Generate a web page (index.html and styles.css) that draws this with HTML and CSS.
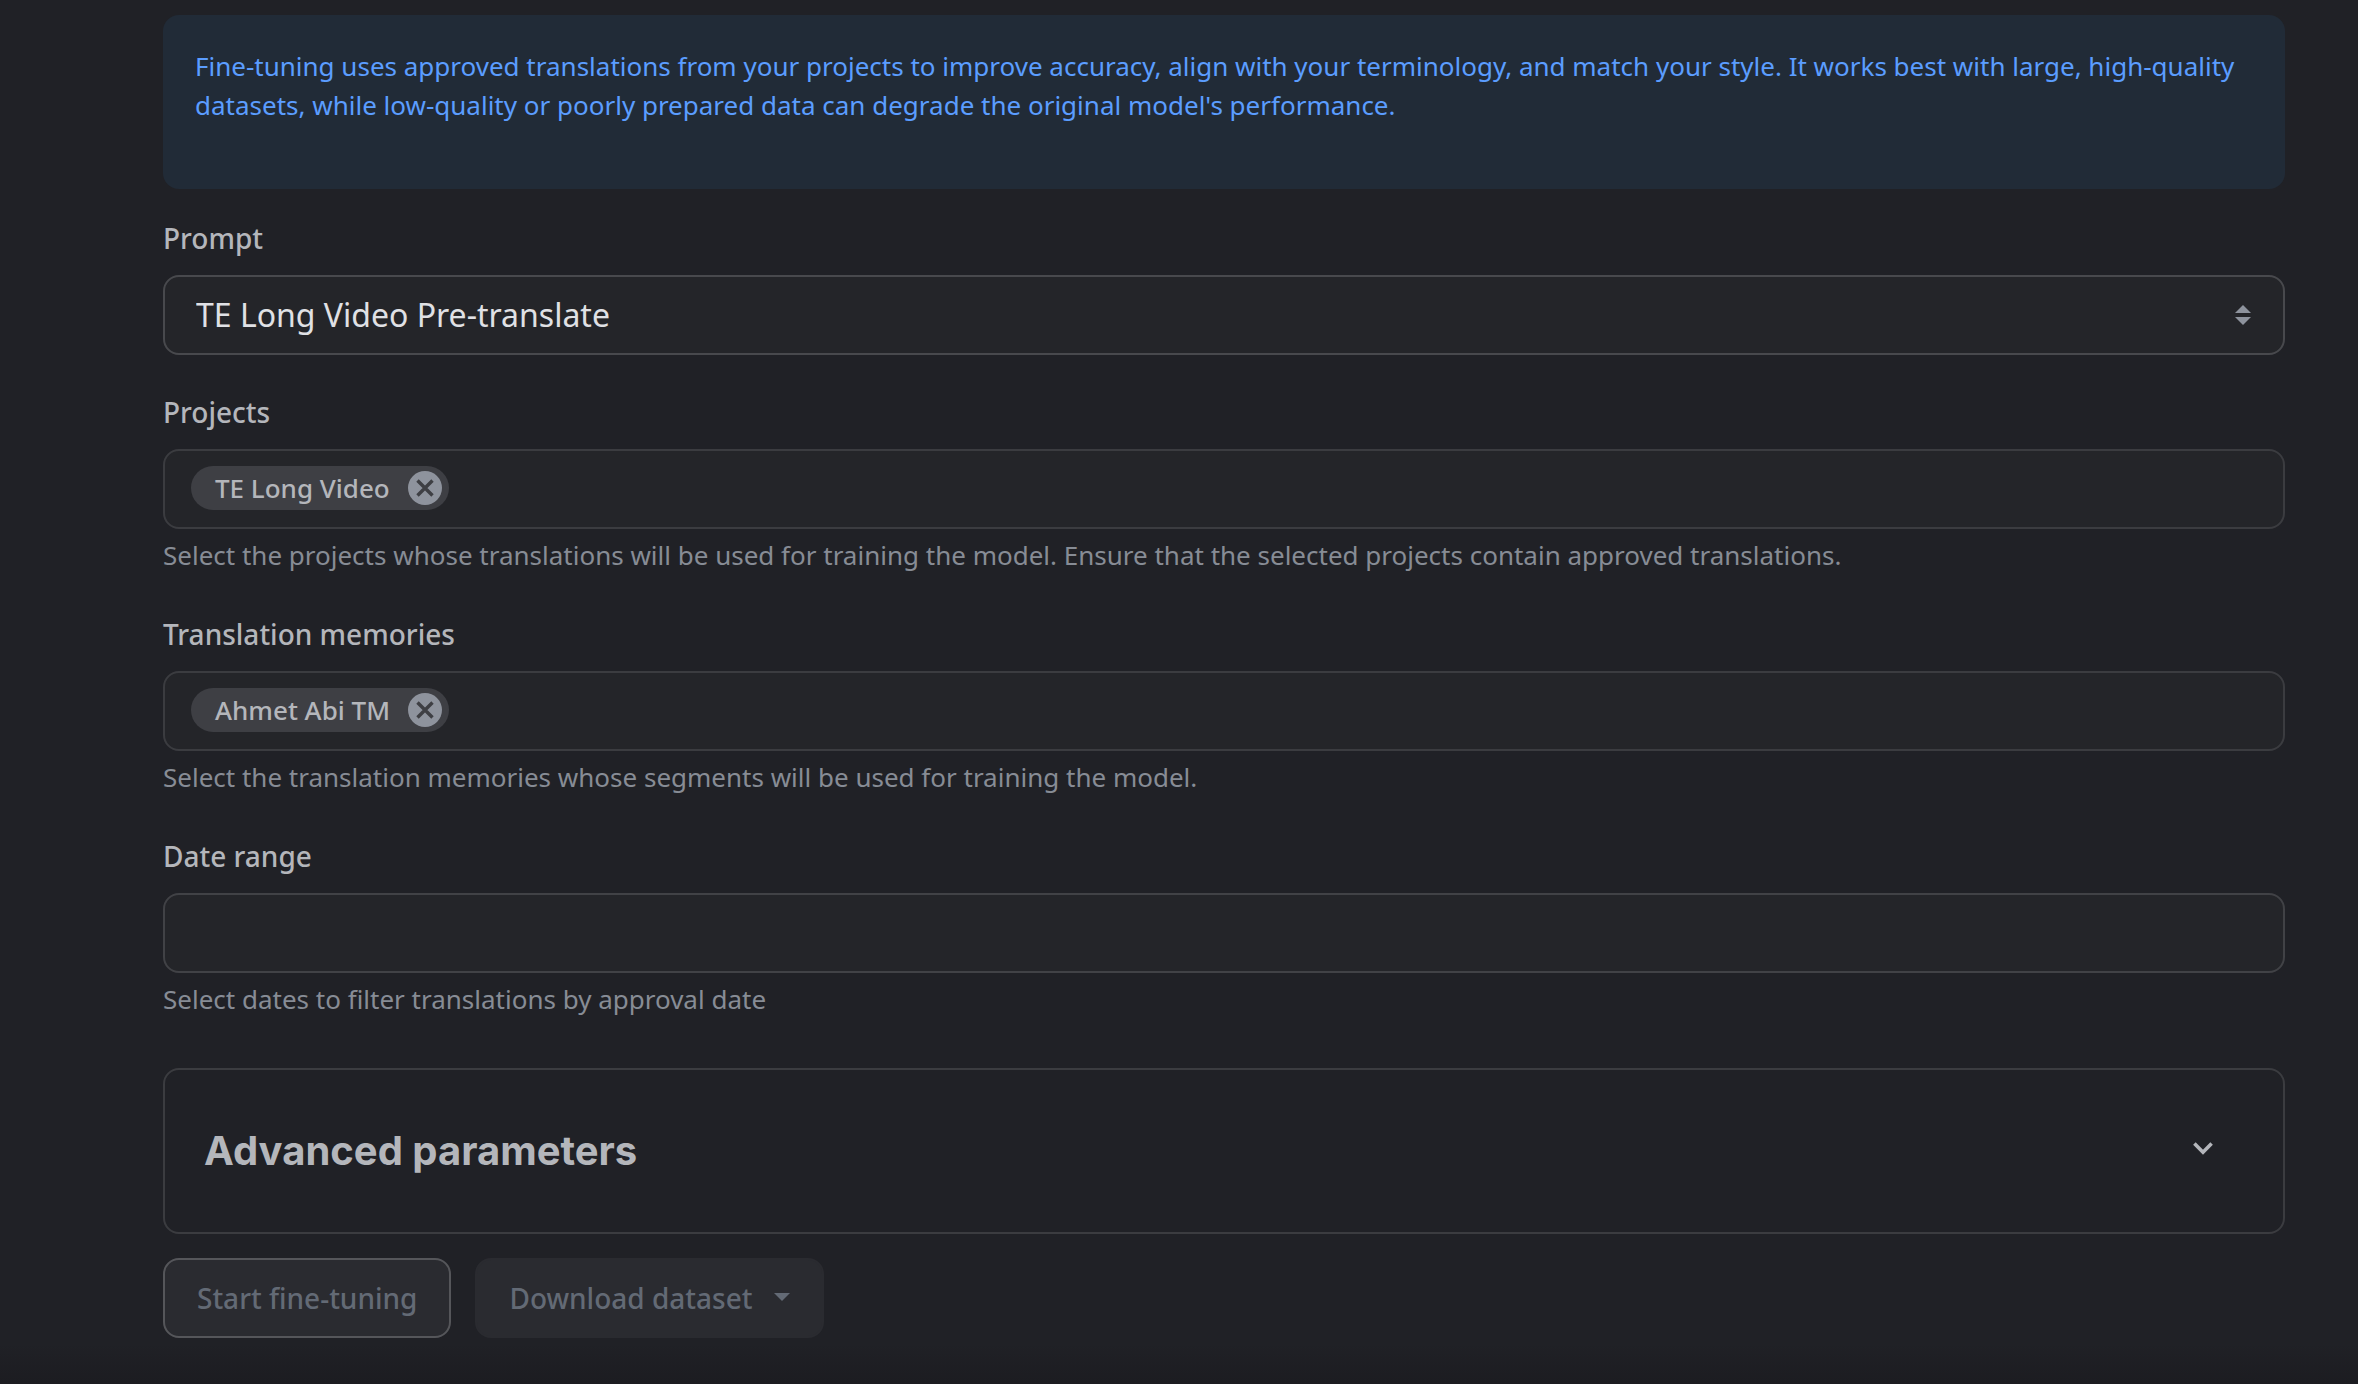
FILE: index.html
```html
<!DOCTYPE html>
<html lang="en">
    <head>
        <meta charset="UTF-8">
        <meta name="viewport" content="width=device-width, initial-scale=1">
        <title>Fine-tuning</title>
        <link rel="stylesheet" href="styles.css">
    </head>

    <body>
        <form class="page">
            <div class="alert">
                <p>Fine-tuning uses approved translations from your projects to improve accuracy, align with your terminology, and match your style. It works best with large, high-quality datasets, while low-quality or poorly prepared data can degrade the original model's performance.</p>
            </div>

            <div class="field">
                <label for="prompt">Prompt</label>
                <div class="select">
                    <select class="control" id="prompt">
                        <option>TE Long Video Pre-translate</option>
                    </select>
                    <svg class="select_icon" viewBox="0 0 16 20" width="16" height="20">
                        <path d="M8 0L16 8H0zM8 20L0 12H16z" fill="currentColor"/>
                    </svg>
                </div>
            </div>

            <div class="field">
                <label for="projects">Projects</label>
                <div class="control tags">
                    <span class="tag">
                        TE Long Video
                        <button type="button" class="remove" aria-label="Remove TE Long Video">
                            <svg viewBox="0 0 34 34" width="34" height="34">
                                <circle cx="17" cy="17" r="17" fill="#8e939d"/>
                                <path d="M9.5 9.5L24.5 24.5M24.5 9.5L9.5 24.5" stroke="#3e3f44" stroke-width="3.4"/>
                            </svg>
                        </button>
                    </span>
                    <input type="text" class="tag_input" id="projects">
                </div>
                <p class="hint">Select the projects whose translations will be used for training the model. Ensure that the selected projects contain approved translations.</p>
            </div>

            <div class="field">
                <label for="memories">Translation memories</label>
                <div class="control tags">
                    <span class="tag">
                        Ahmet Abi TM
                        <button type="button" class="remove" aria-label="Remove Ahmet Abi TM">
                            <svg viewBox="0 0 34 34" width="34" height="34">
                                <circle cx="17" cy="17" r="17" fill="#8e939d"/>
                                <path d="M9.5 9.5L24.5 24.5M24.5 9.5L9.5 24.5" stroke="#3e3f44" stroke-width="3.4"/>
                            </svg>
                        </button>
                    </span>
                    <input type="text" class="tag_input" id="memories">
                </div>
                <p class="hint">Select the translation memories whose segments will be used for training the model.</p>
            </div>

            <div class="field">
                <label for="dates">Date range</label>
                <input type="text" class="control" id="dates">
                <p class="hint">Select dates to filter translations by approval date</p>
            </div>

            <button type="button" class="advanced" aria-expanded="false">
                Advanced parameters
                <svg viewBox="0 0 20 18" width="20" height="18">
                    <path d="M1.4 1.6L10 10.2L18.6 1.6" fill="none" stroke="currentColor" stroke-width="3.6"/>
                </svg>
            </button>

            <div class="actions">
                <button type="submit" class="btn btn_outline" disabled>Start fine-tuning</button>
                <button type="button" class="btn" disabled>
                    Download dataset
                    <svg viewBox="0 0 16 10" width="16" height="10">
                        <path d="M0 0H16L8 8z" fill="currentColor"/>
                    </svg>
                </button>
            </div>
        </form>
    </body>
</html>
```

FILE: styles.css
```css
* {
    box-sizing: border-box;
}
body {
    margin: 0;
    min-height: 100vh;
    background: linear-gradient(to top, #1c1c21, #202126 40px);
    color: #b4b6bb;
    font-family: "Noto Sans", sans-serif;
    font-size: 26px;
}
button, input, select {
    font: inherit;
    color: inherit;
}
p {
    margin: 0;
}
.page {
    padding: 15px 73px 46px 163px;
}
.alert {
    margin-bottom: 30px;
    padding: 32px 32px 64px;
    border-radius: 16px;
    background-color: #212b37;
    color: #5b9dff;
    line-height: 39px;
}
.field {
    margin-bottom: 38px;
}
.field label {
    display: block;
    margin-bottom: 18px;
    font-size: 28px;
    font-weight: 500;
    line-height: 38px;
}
.control {
    display: block;
    width: 100%;
    height: 80px;
    padding: 0 31px;
    border: 2px solid #414246;
    border-radius: 16px;
    outline: none;
    background-color: #242529;
}
.select {
    display: grid;
    align-items: center;
}
.select .control, .select_icon {
    grid-area: 1 / 1;
}
.select .control {
    appearance: none;
    padding-bottom: 2px;
    border-color: #48494d;
    color: #e0e1e5;
    font-size: 32px;
}
.select_icon {
    justify-self: end;
    margin-right: 34px;
    color: #8e939d;
    pointer-events: none;
}
.tags {
    display: flex;
    align-items: center;
    gap: 12px;
    padding: 0 26px 2px;
    border-color: #3b3c40;
}
.tag {
    display: flex;
    align-items: center;
    gap: 18px;
    height: 44px;
    padding: 0 7px 0 24px;
    border-radius: 22px;
    background-color: #3e3f44;
    font-weight: 500;
}
.remove {
    display: flex;
    padding: 0;
    border: 0;
    background: none;
}
.tag_input {
    flex: 1;
    border: 0;
    outline: none;
    background: none;
}
.hint {
    margin-top: 6px;
    padding-bottom: 2px;
    color: #878c95;
    line-height: 40px;
}
.advanced {
    display: flex;
    align-items: center;
    justify-content: space-between;
    width: 100%;
    margin-top: 47px;
    padding: 56px 70px 56px 39px;
    border: 2px solid #3b3c40;
    border-radius: 16px;
    background: none;
    font-family: Inter, sans-serif;
    font-size: 40px;
    font-weight: 700;
    line-height: 50px;
}
.actions {
    display: flex;
    gap: 24px;
    margin-top: 24px;
}
.btn {
    display: flex;
    align-items: center;
    gap: 22px;
    height: 80px;
    padding: 0 32px;
    border: 2px solid #2a2b30;
    border-radius: 16px;
    background-color: #2a2b30;
    color: #636a75;
    font-size: 28px;
    font-weight: 500;
}
.btn_outline {
    border-color: #55565a;
}
```
